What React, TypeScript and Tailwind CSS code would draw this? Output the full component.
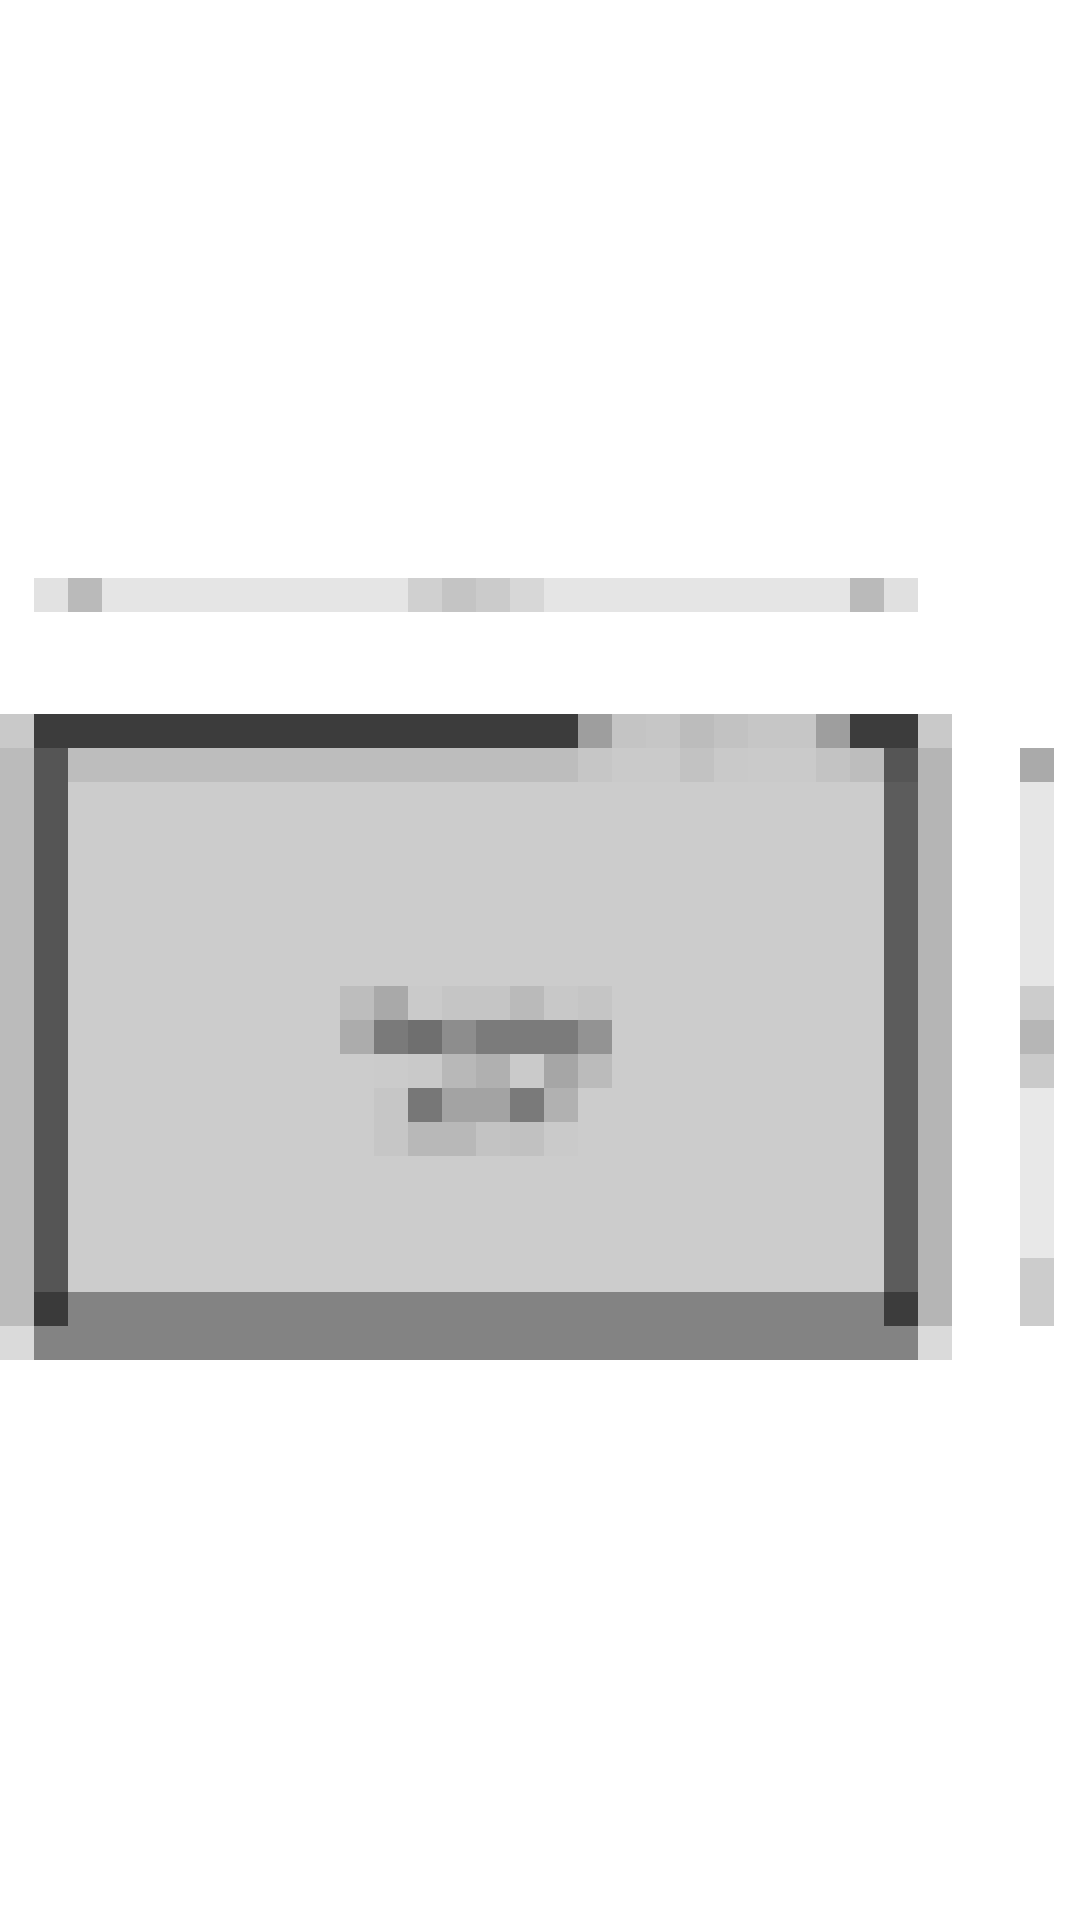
import React from "react";

const P: Record<string, string> = {
  ".": "bg-[#ffffff]",
  a: "bg-[#e5e5e5]",
  b: "bg-[#bababa]",
  c: "bg-[#d0d0d0]",
  d: "bg-[#c4c4c4]",
  e: "bg-[#cbcbcb]",
  f: "bg-[#d7d7d7]",
  g: "bg-[#e0e0e0]",
  h: "bg-[#e2e2e2]",
  D: "bg-[#3c3c3c]",
  E: "bg-[#555555]",
  F: "bg-[#5c5c5c]",
  G: "bg-[#838383]",
  k: "bg-[#9e9e9e]",
  l: "bg-[#c6c6c6]",
  m: "bg-[#bcbcbc]",
  n: "bg-[#c2c2c2]",
  o: "bg-[#cacaca]",
  p: "bg-[#c9c9c9]",
  q: "bg-[#bdbdbd]",
  r: "bg-[#b5b5b5]",
  s: "bg-[#bbbbbb]",
  t: "bg-[#cccccc]",
  u: "bg-[#dadada]",
  v: "bg-[#aaaaaa]",
  w: "bg-[#e6e6e6]",
  x: "bg-[#b6b6b6]",
  y: "bg-[#e8e8e8]",
  z: "bg-[#3a3a3a]",
  "1": "bg-[#a9a9a9]",
  "2": "bg-[#acacac]",
  "3": "bg-[#7a7a7a]",
  "4": "bg-[#6f6f6f]",
  "5": "bg-[#8d8d8d]",
  "6": "bg-[#7b7b7b]",
  "7": "bg-[#939393]",
  "8": "bg-[#b8b8b8]",
  "9": "bg-[#b0b0b0]",
  A: "bg-[#a6a6a6]",
  B: "bg-[#777777]",
  C: "bg-[#a3a3a3]",
  H: "bg-[#b1b1b1]",
  I: "bg-[#c1c1c1]",
  J: "bg-[#c3c3c3]",
  K: "bg-[#c5c5c5]",
  M: "bg-[#c8c8c8]",
};

const W = "...............................";
const body = (mid: string, end: string) => "sE" + mid + "Fr.." + end;
const T8 = "tttttttt";
const T24 = T8 + T8 + T8;

const ROWS: string[] = [
  // row 17
  ".hb" + "aaaaaaaaa" + "cdef" + "aaaaaaaaa" + "bg" + "....",
  W,
  W,
  W,
  // row 21
  "p" + "DDDDDDDDDDDDDDDD" + "kdlmnllk" + "DD" + "p" + "...",
  // row 22
  "sE" + "qqqqqqqqqqqqqqq" + "loonpooJq" + "E" + "r" + ".." + "v",
  body(T24, "w"),
  body(T24, "w"),
  body(T24, "w"),
  body(T24, "w"),
  body(T24, "w"),
  body(T24, "w"),
  // row 29 - 33 (icon)
  body(T8 + "q1oKKbMK" + T8, "t"),
  body(T8 + "23456667" + T8, "x"),
  body(T8 + "tep89oAs" + T8, "o"),
  body(T8 + "tlBCC3Ht" + T8, "y"),
  body(T8 + "tl88JIot" + T8, "y"),
  body(T24, "y"),
  body(T24, "y"),
  body(T24, "y"),
  // row 37
  body(T24, "t"),
  // row 38
  "sz" + "GGGGGGGGGGGGGGGGGGGGGGGG" + "Dr.." + "t",
  // row 39
  "u" + "GGGGGGGGGGGGGGGGGGGGGGGGGG" + "u" + "...",
];

export default function App() {
  return (
    <div className="w-[1080px] h-[1920px] overflow-hidden bg-white flex flex-col pt-[578px]">
      {ROWS.map((row, i) => (
        <div key={i} className="flex h-[34px] shrink-0">
          {row.split("").map((ch, j) => (
            <div key={j} className={"w-[34px] h-[34px] shrink-0 " + (P[ch] ?? "bg-[#ffffff]")} />
          ))}
        </div>
      ))}
    </div>
  );
}
